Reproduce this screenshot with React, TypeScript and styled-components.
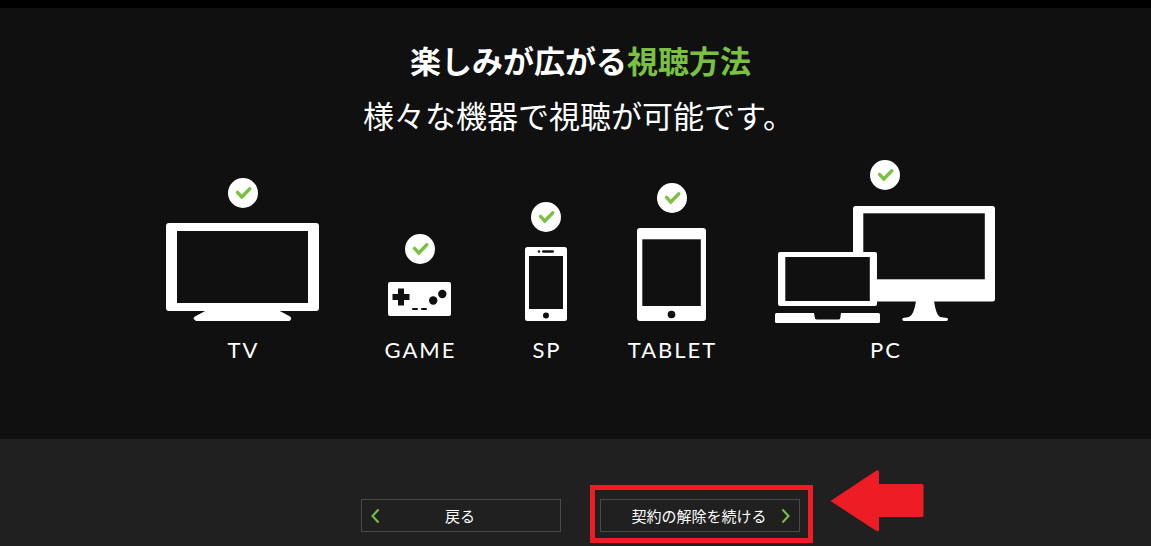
import React from "react";
import styled, { createGlobalStyle } from "styled-components";

const colors = {
  stage: "#101010",
  footer: "#202020",
  line: "#4a4a4a",
  green: "#7ac142",
  red: "#ee1c24",
};

const GlobalStyle = createGlobalStyle`
  * { box-sizing: border-box; }
  body {
    margin: 0;
    background: ${colors.footer};
    color: #fff;
    font-family: "Noto Sans CJK JP", sans-serif;
  }
`;

const Page = styled.div`
  display: flex;
  flex-direction: column;
  min-height: 100vh;
`;

const TopBar = styled.div`
  height: 8px;
  background: #000;
`;

const Stage = styled.main`
  display: flex;
  flex-direction: column;
  align-items: center;
  padding: 30px 0 75px 10px;
  background: ${colors.stage};
`;

const Title = styled.h1`
  margin: 0;
  font-size: 31px;
  line-height: 44px;
  font-weight: 700;
`;

const Accent = styled.span`
  color: ${colors.green};
`;

const Lead = styled.p`
  margin: 11px 0 0;
  padding-right: 4px;
  font-size: 31px;
  line-height: 44px;
  font-weight: 400;
`;

const DeviceList = styled.ul`
  display: flex;
  align-items: flex-end;
  gap: 60px;
  margin: 23px 0 0;
  padding: 0 0 0 4px;
  list-style: none;
`;

const Device = styled.li<{ $width: number }>`
  display: flex;
  flex-direction: column;
  align-items: center;
  width: ${(p) => p.$width}px;

  svg {
    display: block;
    flex: none;
  }
`;

const Art = styled.svg`
  margin-top: 15px;
  fill: #fff;
`;

const DeviceName = styled.span`
  margin-top: 13px;
  padding-left: 2px;
  font-family: Lato, sans-serif;
  font-size: 22px;
  line-height: 28px;
  letter-spacing: 2px;
  white-space: nowrap;
`;

const Footer = styled.footer`
  flex: 1;
  display: flex;
  justify-content: center;
  align-items: flex-start;
  gap: 39px;
  padding: 60px 0 14px 10px;
  background: ${colors.footer};
`;

const ActionButton = styled.button`
  position: relative;
  display: block;
  width: 200px;
  height: 33px;
  padding: 0 2px 0 0;
  border: 1px solid ${colors.line};
  background: transparent;
  color: #fff;
  font-family: inherit;
  font-size: 15px;
  line-height: 30px;
  text-align: center;
  cursor: pointer;
`;

const Chevron = styled.svg<{ $side: "left" | "right" }>`
  position: absolute;
  top: 8px;
  ${(p) => p.$side}: 8px;
  fill: none;
  stroke: ${colors.green};
  stroke-width: 2;
`;

const Highlighted = styled.div`
  position: relative;
`;

const HighlightFrame = styled.div`
  position: absolute;
  inset: -14px -13px -11px -10px;
  border: 5px solid ${colors.red};
  pointer-events: none;
`;

const Pointer = styled.svg`
  position: absolute;
  top: -29px;
  left: 230px;
  fill: ${colors.red};
`;

const CheckBadge = () => (
  <svg width="30" height="30" viewBox="0 0 30 30" aria-hidden="true">
    <circle cx="15" cy="15" r="15" fill="#fff" />
    <path
      d="M9.5 14.4 L13.8 19 L21.8 10.8"
      fill="none"
      stroke={colors.green}
      strokeWidth="3.4"
      strokeLinecap="round"
    />
  </svg>
);

const TvArt = () => (
  <Art width="153" height="100" viewBox="0 0 153 100" aria-hidden="true">
    <path
      fillRule="evenodd"
      d="M3 0H150Q153 0 153 3V85Q153 88 150 88H3Q0 88 0 85V3Q0 0 3 0ZM11 8V80H142V8Z"
    />
    <path d="M41 87H112L124 93.5Q126.500 95.5 123.500 98H30Q26 95.5 29 93.500Z" />
  </Art>
);

const GameArt = () => (
  <Art width="63" height="44" viewBox="0 0 63 44" aria-hidden="true">
    <rect y="3" width="63" height="34" rx="2" />
    <g fill={colors.stage}>
      <path d="M10 9.500H16V15H21.500V21H16V26.500H10V21H4.500V15H10Z" />
      <circle cx="54.300" cy="15" r="4.2" />
      <circle cx="45.200" cy="21.500" r="4.2" />
      <rect x="24" y="29" width="6" height="2" rx="1" />
      <rect x="33" y="29" width="6" height="2" rx="1" />
    </g>
  </Art>
);

const PhoneArt = () => (
  <Art width="42" height="76" viewBox="0 0 42 76" aria-hidden="true">
    <rect width="42" height="74" rx="2.500" />
    <g fill={colors.stage}>
      <rect x="4" y="9" width="34" height="53" />
      <circle cx="14" cy="4.500" r="1.200" />
      <rect x="17" y="3.200" width="12" height="2.600" rx="1.300" />
      <circle cx="21" cy="68.500" r="3" />
    </g>
  </Art>
);

const TabletArt = () => (
  <Art width="69" height="95" viewBox="0 0 69 95" aria-hidden="true">
    <rect width="69" height="93" rx="3" />
    <g fill={colors.stage}>
      <rect x="5.300" y="11.300" width="58.500" height="66.700" />
      <circle cx="34.500" cy="86.500" r="3.800" />
    </g>
  </Art>
);

const PcArt = () => (
  <Art width="220" height="118" viewBox="0 0 220 118" aria-hidden="true">
    <rect x="78" y="1" width="142" height="95.500" rx="2.500" />
    <path d="M141 96H159Q161 110 165 112L172 113Q174 114 172 116H129Q126 115 128 113L134 112Q139 110 141 96Z" />
    <rect x="88.300" y="8.300" width="121.500" height="66" fill={colors.stage} />
    <rect x="3" y="47" width="99" height="54" rx="2" />
    <rect x="10.300" y="52" width="84.500" height="44" fill={colors.stage} />
    <path d="M1.500 108H39L40 113.500Q40.500 114.500 42 114.500H63.500Q65 114.500 65.200 113.500L66 108H103.500Q105 108 105 109.500V116.500Q105 118 103.500 118H1.500Q0 118 0 116.500V109.500Q0 108 1.500 108Z" />
  </Art>
);

const devices = [
  { name: "TV", width: 153, Drawing: TvArt },
  { name: "GAME", width: 81, Drawing: GameArt },
  { name: "SP", width: 52, Drawing: PhoneArt },
  { name: "TABLET", width: 79, Drawing: TabletArt },
  { name: "PC", width: 228, Drawing: PcArt },
];

export default function App() {
  return (
    <Page>
      <GlobalStyle />
      <TopBar />
      <Stage lang="ja">
        <Title>
          楽しみが広がる<Accent>視聴方法</Accent>
        </Title>
        <Lead>様々な機器で視聴が可能です。</Lead>
        <DeviceList>
          {devices.map(({ name, width, Drawing }) => (
            <Device key={name} $width={width}>
              <CheckBadge />
              <Drawing />
              <DeviceName>{name}</DeviceName>
            </Device>
          ))}
        </DeviceList>
      </Stage>
      <Footer lang="ja">
        <ActionButton type="button">
          <Chevron $side="left" width="10" height="16" viewBox="0 0 10 16" aria-hidden="true">
            <path d="M8.500 1.500 L2.500 8 L8.500 14.500" />
          </Chevron>
          戻る
        </ActionButton>
        <Highlighted>
          <ActionButton type="button">
            契約の解除を続ける
            <Chevron $side="right" width="10" height="16" viewBox="0 0 10 16" aria-hidden="true">
              <path d="M1.500 1.500 L7.500 8 L1.500 14.500" />
            </Chevron>
          </ActionButton>
          <HighlightFrame />
          <Pointer width="94" height="62" viewBox="0 0 94 62" aria-hidden="true">
            <path d="M0.500 31 L46.500 0.500 Q49 -0.500 49 2 V14 H92 Q93.500 14 93.500 15.500 V45.500 Q93.500 47 92 47 H49 V60 Q49 62 46.500 61Z" />
          </Pointer>
        </Highlighted>
      </Footer>
    </Page>
  );
}
